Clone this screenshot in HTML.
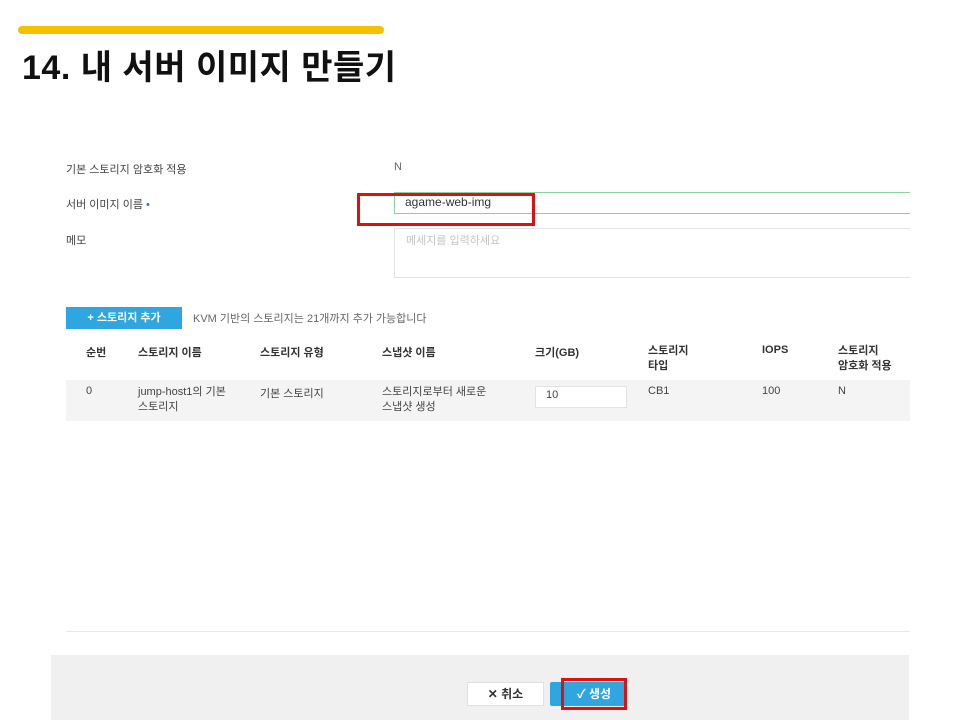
<!DOCTYPE html>
<html><head><meta charset="utf-8"><style>
*{margin:0;padding:0;box-sizing:border-box}
body{width:960px;height:720px;background:#fff;position:relative;overflow:hidden;font-family:"Liberation Sans","Noto Sans CJK KR",sans-serif;color:#333}
.a{position:absolute;white-space:nowrap}
.s{font-size:11px;color:#444}
.h{font-size:11px;font-weight:bold;color:#333}
</style></head><body>
<div class="a" style="left:18px;top:26px;width:366px;height:8px;background:#f5c000;border-radius:4px"></div>
<div class="a" style="left:22px;top:40px;font-size:34px;font-weight:bold;color:#111;letter-spacing:0.5px">14. 내 서버 이미지 만들기</div>

<div class="a s" style="left:66px;top:161px">기본 스토리지 암호화 적용</div>
<div class="a s" style="left:394px;top:161px;color:#666">N</div>
<div class="a s" style="left:66px;top:196px">서버 이미지 이름 <span style="color:#1e7ad6">•</span></div>
<div class="a" style="left:394px;top:192px;width:516px;height:22px;border:1px solid #8fd09a;border-right:none"></div>
<div class="a" style="left:405px;top:195px;font-size:12px;color:#333">agame-web-img</div>
<div class="a" style="left:357px;top:193px;width:178px;height:33px;border:3px solid #e01010"></div>
<div class="a s" style="left:66px;top:232px">메모</div>
<div class="a" style="left:394px;top:228px;width:516px;height:50px;border:1px solid #e3e3e3;border-right:none"></div>
<div class="a" style="left:406px;top:232px;font-size:11px;color:#c4c4c4">메세지를 입력하세요</div>

<div class="a" style="left:66px;top:307px;width:116px;height:22px;background:#2fa6e0;color:#fff;font-size:11px;font-weight:bold;text-align:center;line-height:22px">+ 스토리지 추가</div>
<div class="a s" style="left:193px;top:310px;color:#666">KVM 기반의 스토리지는 21개까지 추가 가능합니다</div>

<div class="a h" style="left:86px;top:344px">순번</div>
<div class="a h" style="left:138px;top:344px">스토리지 이름</div>
<div class="a h" style="left:260px;top:344px">스토리지 유형</div>
<div class="a h" style="left:382px;top:344px">스냅샷 이름</div>
<div class="a h" style="left:535px;top:344px">크기(GB)</div>
<div class="a h" style="left:648px;top:344px;line-height:15px">스토리지<br>타입</div>
<div class="a h" style="left:762px;top:344px">IOPS</div>
<div class="a h" style="left:838px;top:344px;line-height:15px">스토리지<br>암호화 적용</div>
<div class="a" style="left:66px;top:380px;width:844px;height:41px;background:#f4f4f4"></div>
<div class="a s" style="left:86px;top:385px">0</div>
<div class="a s" style="left:138px;top:385px;line-height:15px">jump-host1의 기본<br>스토리지</div>
<div class="a s" style="left:260px;top:385px">기본 스토리지</div>
<div class="a s" style="left:382px;top:385px;line-height:15px">스토리지로부터 새로운<br>스냅샷 생성</div>
<div class="a" style="left:535px;top:386px;width:92px;height:22px;background:#fff;border:1px solid #e3e3e3"></div>
<div class="a s" style="left:546px;top:389px">10</div>
<div class="a s" style="left:648px;top:385px">CB1</div>
<div class="a s" style="left:762px;top:385px">100</div>
<div class="a s" style="left:838px;top:385px">N</div>

<div class="a" style="left:66px;top:631px;width:844px;height:1px;background:#e8e8e8"></div>
<div class="a" style="left:51px;top:655px;width:858px;height:65px;background:#f0f0f0"></div>
<div class="a" style="left:467px;top:682px;width:77px;height:24px;background:#fff;border:1px solid #e0e0e0;font-size:12px;font-weight:bold;text-align:center;line-height:22px;color:#333">✕ 취소</div>
<div class="a" style="left:550px;top:682px;width:76px;height:24px;background:#2fa6e0;border-radius:2px"></div>
<div class="a" style="left:561px;top:678px;width:66px;height:32px;border:3px solid #e01010;color:#fff;font-size:12px;font-weight:bold;text-align:center;line-height:26px">✓ 생성</div>
</body></html>
